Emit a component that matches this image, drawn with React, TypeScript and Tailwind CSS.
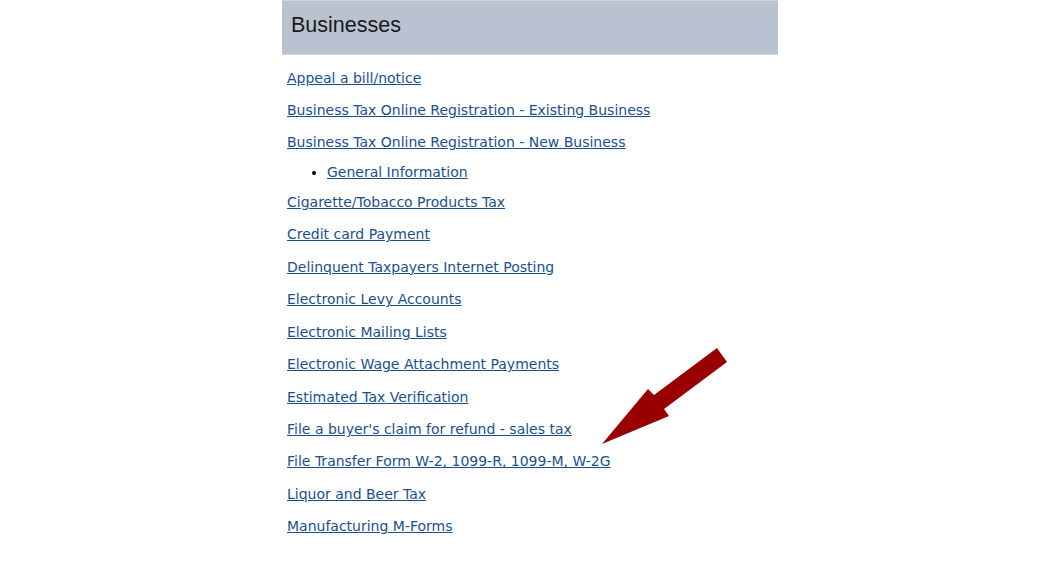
import React from 'react';

const links = [
  'Appeal a bill/notice',
  'Business Tax Online Registration - Existing Business',
  'Business Tax Online Registration - New Business',
];

const moreLinks = [
  'Cigarette/Tobacco Products Tax',
  'Credit card Payment',
  'Delinquent Taxpayers Internet Posting',
  'Electronic Levy Accounts',
  'Electronic Mailing Lists',
  'Electronic Wage Attachment Payments',
  'Estimated Tax Verification',
  "File a buyer's claim for refund - sales tax",
  'File Transfer Form W-2, 1099-R, 1099-M, W-2G',
  'Liquor and Beer Tax',
  'Manufacturing M-Forms',
];

const Arrow = () => (
  <svg className="absolute left-[600px] top-[346px]" width="130" height="100" viewBox="600 346 130 100">
    <polygon
      points="602,444 648,389 654,395 717,348 727,362 664,409 669,416"
      fill="#990000"
    />
  </svg>
);

const App: React.FC = () => {
  return (
    <div className="relative min-h-[564px] w-[1056px] bg-white">
      <div className="ml-[282px] w-[496px]">
        <div className="h-[55px] border-t border-b border-[#d6d6d6] bg-[#b9c2d0] pl-[9px] pt-[11px]">
          <h2 className="text-[21.5px] leading-[26px] text-[#1a1a1a] font-['Liberation_Sans',Arial,sans-serif]">
            Businesses
          </h2>
        </div>
        <div className="pl-[5px] pt-[14px] font-['DejaVu_Sans',Verdana,sans-serif] text-[14px] leading-[18px]">
          {links.map((l) => (
            <div key={l} className="mb-[14.2px]">
              <a href="#" className="text-[#1b4f8c] underline">{l}</a>
            </div>
          ))}
          <ul className="-mt-[2.8px] mb-[12.2px] list-disc pl-[40px]">
            <li className="marker:text-black">
              <a href="#" className="text-[#1b4f8c] underline">General Information</a>
            </li>
          </ul>
          {moreLinks.map((l) => (
            <div key={l} className="mb-[14.45px]">
              <a href="#" className="text-[#1b4f8c] underline">{l}</a>
            </div>
          ))}
        </div>
      </div>
      <Arrow />
    </div>
  );
};

export default App;
